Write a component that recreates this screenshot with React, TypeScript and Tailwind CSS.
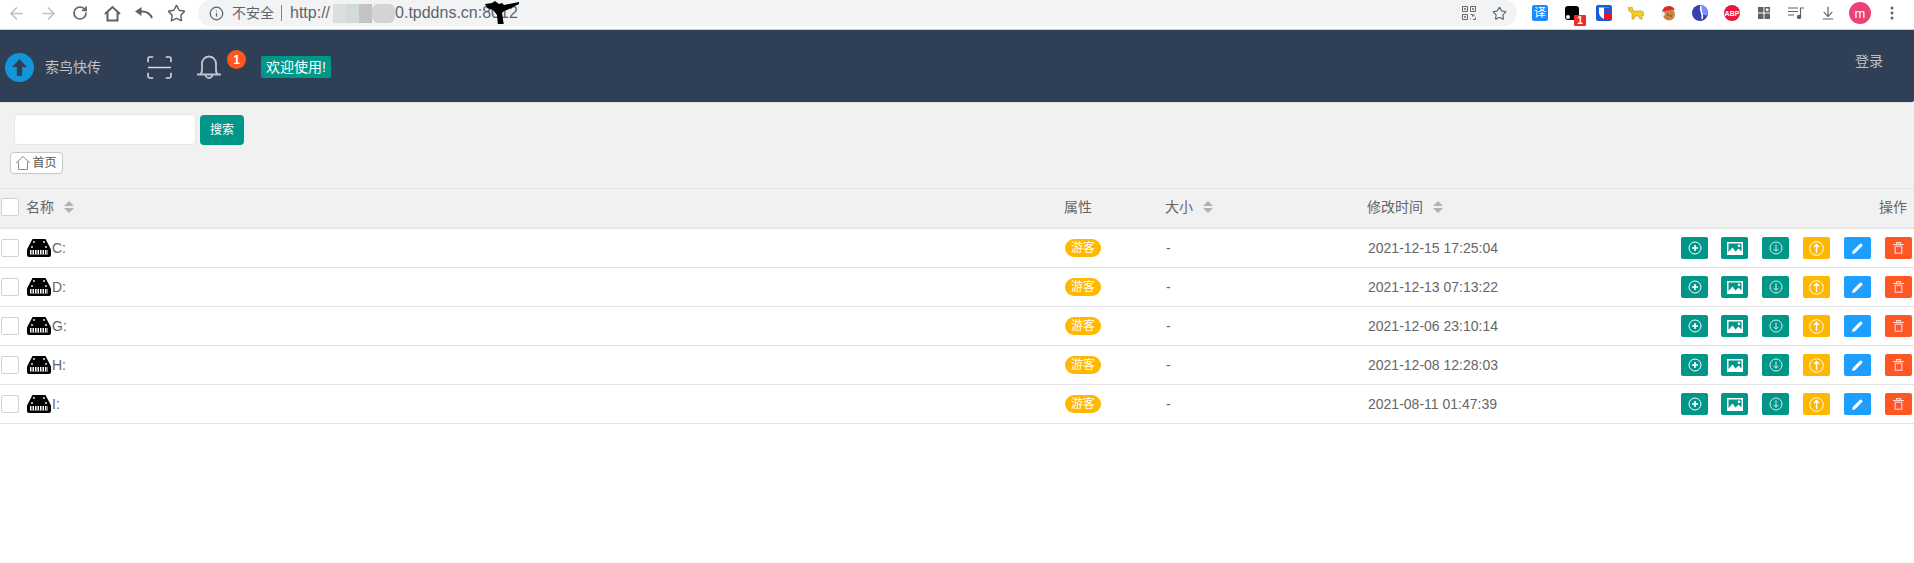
import { ArrowLeft, ArrowRight, RotateCw, Star, Info, ArrowDownToLine } from "lucide-react";

const rows = [
  { name: "C:", time: "2021-12-15 17:25:04" },
  { name: "D:", time: "2021-12-13 07:13:22" },
  { name: "G:", time: "2021-12-06 23:10:14" },
  { name: "H:", time: "2021-12-08 12:28:03" },
  { name: "I:", time: "2021-08-11 01:47:39" },
];

function Sort() {
  return (
    <svg width="10" height="12" viewBox="0 0 10 12" className="ml-[10px]">
      <path d="M5 0l5 5H0zM0 7h10l-5 5z" fill="#b2b2b2" />
    </svg>
  );
}

function Check() {
  return <div className="ml-px h-[18px] w-[18px] shrink-0 rounded-[2px] border border-[#d2d2d2] bg-white" />;
}

function Disk() {
  return (
    <svg width="24" height="18" viewBox="0 0 24 18" className="shrink-0">
      <path d="M5.500 0h13L23 8.500l1 2V16a2 2 0 0 1-2 2H2a2 2 0 0 1-2-2v-5.500l1-2z" fill="#000" />
      <path d="M3 11h18v4.500H3z" fill="#fff" />
      <path d="M5 11v4.500M7.500 11v4.500M10 11v4.500M12.500 11v4.500M15 11v4.500M17.500 11v4.500M20 11v4.500" stroke="#000" strokeWidth="1" />
      <circle cx="7" cy="3" r="0.900" fill="#fff" />
      <circle cx="17" cy="3" r="0.900" fill="#fff" />
      <circle cx="5" cy="8" r="0.900" fill="#fff" />
      <circle cx="19" cy="8" r="0.900" fill="#fff" />
    </svg>
  );
}

function Actions() {
  const cls = "flex h-[22px] w-[27px] items-center justify-center rounded-[2px]";
  return (
    <div className="flex gap-[14px]">
      <div className={`${cls} mr-[-1px] bg-[#009688]`}>
        <svg width="14" height="14" viewBox="0 0 14 14" fill="none" stroke="#fff">
          <circle cx="7" cy="7" r="6" />
          <path d="M7 4v6M4 7h6" strokeWidth="1.600" />
        </svg>
      </div>
      <div className={`${cls} bg-[#009688]`}>
        <svg width="16" height="13" viewBox="0 0 16 13">
          <path d="M0 0h16v13H0z" fill="#fff" />
          <path d="M1.500 1.500h13v8l-3-3-3 3-3-4-4 4.500z" fill="#009688" />
          <circle cx="12" cy="3.700" r="1.300" fill="#fff" />
        </svg>
      </div>
      <div className={`${cls} bg-[#009688]`}>
        <svg width="14" height="14" viewBox="0 0 14 14" fill="none" stroke="#d8f0ed">
          <circle cx="7" cy="7" r="6" />
          <path d="M7 3.500v6.500M4.500 7.800L7 10.300l2.500-2.500" />
        </svg>
      </div>
      <div className={`${cls} bg-[#ffb800]`}>
        <svg width="15" height="15" viewBox="0 0 15 15" fill="none" stroke="#fff">
          <circle cx="7.500" cy="7.500" r="6.800" />
          <path d="M7.500 12V3.500M5 6l2.500-2.500L10 6" strokeWidth="1.400" />
        </svg>
      </div>
      <div className={`${cls} bg-[#1e9fff]`}>
        <svg width="11" height="11" viewBox="0 0 11 11">
          <path d="M0 11l.8-3L8 .8a1 1 0 0 1 1.400 0l.8.8a1 1 0 0 1 0 1.400L3 10.200z" fill="#fff" />
        </svg>
      </div>
      <div className={`${cls} bg-[#ff5722]`}>
        <svg width="11" height="12" viewBox="0 0 11 12" fill="none">
          <path d="M0 2.500h11M3.500 2V.6h4V2" stroke="#ffd9cc" strokeWidth="1.200" />
          <path d="M1.500 3.500h8V12h-8z" fill="#ffb3c0" />
          <path d="M3 5h5v5.500H3z" fill="#ff5722" />
        </svg>
      </div>
    </div>
  );
}

function Ext({ children }: { children: React.ReactNode }) {
  return <div className="flex w-[32px] items-center justify-center">{children}</div>;
}

function Toolbar() {
  const gray = "#5f6368";
  return (
    <div className="flex h-[30px] items-start border-b border-[#ccd0d4] bg-white">
      <div className="flex h-[26px] items-center">
        <div className="flex w-[32px] justify-center"><ArrowLeft size={19} color="#bdc1c6" /></div>
        <div className="flex w-[32px] justify-center"><ArrowRight size={19} color="#bdc1c6" /></div>
        <div className="flex w-[32px] justify-center"><RotateCw size={16} color={gray} strokeWidth={2.600} /></div>
        <div className="flex w-[32px] justify-center">
          <svg width="17" height="17" viewBox="0 0 17 17" fill="none" stroke={gray} strokeWidth="2">
            <path d="M1 9l7.500-7L16 9M3.500 7.500V15.500h10V7.500" />
          </svg>
        </div>
        <div className="flex w-[32px] justify-center">
          <svg width="18" height="12" viewBox="0 0 18 12" fill="none">
            <path d="M6.500 0v9L0 4.500z" fill={gray} />
            <path d="M6 4.500q8-.5 11 6.500" stroke={gray} strokeWidth="2" />
          </svg>
        </div>
        <div className="flex w-[32px] justify-center"><Star size={19} color={gray} strokeWidth={1.800} /></div>
      </div>
      <div className="ml-[6px] flex h-[26px] w-[1319px] items-center rounded-[13px] bg-[#f1f3f4] pl-[11px] pr-[10px]">
        <Info size={15} color={gray} strokeWidth={2} />
        <span className="ml-[8px] text-[14px] text-[#5f6368]">不安全</span>
        <span className="ml-[7px] h-[16px] w-px bg-[#80868b]" />
        <div className="relative ml-[8px] flex items-center text-[16px] text-[#5f6368]">
          <span>http://</span>
          <span className="ml-[3px] flex h-[19px] w-[62px] items-stretch">
            <span className="w-[13px] bg-[#dcdedf]" />
            <span className="w-[13px] bg-[#d2dada]" />
            <span className="w-[13px] bg-[#c3c3c5]" />
            <span className="w-[23px] rounded-[6px] bg-[#d4d4d6]" />
          </span>
          <span>0.tpddns.cn:8012</span>
          <svg width="34" height="23" viewBox="0 0 34 23" className="absolute right-[-1px] top-0">
            <path d="M0 3l7-1 3-2 4 3 3-1 2 2 15-3v2l-12 6-3 1-2 2 2 13h-6l-1-11-4-5-6-2z" fill="#000" />
          </svg>
        </div>
        <svg width="16" height="16" viewBox="0 0 16 16" className="ml-auto mr-[15px]" fill="none" stroke="#666">
          <path d="M1.500 1.500h5v5h-5zM9.500 1.500h5v5h-5zM1.500 9.500h5v5h-5z" />
          <path d="M3.500 3.500h1v1h-1zM11.500 3.500h1v1h-1zM3.500 11.500h1v1h-1zM9.500 9.500h2v2M13 9v2.500M9.500 14.500v-1M12 14.500h2.500v-2" />
        </svg>
        <Star size={15} color={gray} strokeWidth={1.800} />
      </div>
      <div className="ml-[7px] flex h-[26px] items-center">
        <Ext><div className="flex h-[16px] w-[16px] items-center justify-center rounded-[2px] bg-[#1a8cff] text-[12px] leading-none text-white">译</div></Ext>
        <Ext>
          <div className="relative h-[14px] w-[14px] rounded-[3px] bg-black">
            <div className="absolute bottom-[1px] left-[1px] h-[4px] w-[4px] rounded-full bg-white" />
            <div className="absolute bottom-[-6px] right-[-7px] flex h-[11px] w-[12px] items-center justify-center rounded-[1px] bg-[#ee2c2c] text-[10px] font-bold leading-none text-white">1</div>
          </div>
        </Ext>
        <Ext>
          <svg width="16" height="16" viewBox="0 0 16 16">
            <rect width="16" height="16" rx="2" fill="#175ddc" />
            <path d="M3 2.500h10v5q0 4-5 6.500-5-2.500-5-6.500z" fill="#fff" />
            <path d="M8 2.500h5v5q0 4-5 6.500z" fill="#175ddc" />
            <rect x="8" y="8.500" width="7" height="6" rx="1" fill="#e8142a" />
            <path d="M9.500 8.500v-1a2 2 0 0 1 4 0v1" stroke="#e8142a" fill="none" />
          </svg>
        </Ext>
        <Ext>
          <svg width="16" height="14" viewBox="0 0 16 14">
            <path d="M0 1l2 1 2-1 1 4h9l2 2-1 3-1-1v4h-2l-1-3H7l-1 3H4V7L1 5z" fill="#f5d21e" stroke="#b38b18" strokeWidth="0.600" />
          </svg>
        </Ext>
        <Ext>
          <svg width="16" height="16" viewBox="0 0 16 16">
            <circle cx="9" cy="9.500" r="6" fill="#c98343" />
            <path d="M2 7q1-6 7-6 4 0 6 4-6-1-13 2z" fill="#e3262a" />
            <circle cx="3" cy="9" r="2" fill="#eee" />
            <circle cx="8" cy="10" r="0.800" fill="#6b3b12" />
            <circle cx="11" cy="11" r="0.800" fill="#6b3b12" />
          </svg>
        </Ext>
        <Ext>
          <svg width="16" height="16" viewBox="0 0 16 16">
            <circle cx="8" cy="8" r="8" fill="#3a3fb0" />
            <path d="M9 0a8 8 0 0 1 7 8c0 2-2 3-4 2-3-1-4-3-4-6 0-2 0-3 1-4z" fill="#7c8cff" />
            <path d="M9 1c-2 4 3 8 1 13" stroke="#fff" strokeWidth="1.500" fill="none" />
          </svg>
        </Ext>
        <Ext>
          <div className="flex h-[16px] w-[16px] items-center justify-center rounded-full bg-[#e8173f] text-[7px] font-bold leading-none text-white">ABP</div>
        </Ext>
        <Ext>
          <svg width="12" height="12" viewBox="0 0 12 12" fill="#5f6368">
            <path d="M0 0h5.500v5.500H0zM6.500 6.500H12V12H6.500zM0 6.500h5.500V12H0z" />
            <path d="M6.500 0H12v5.500H6.500zM8 1.500v2.500h2.500V1.500z" fillRule="evenodd" />
          </svg>
        </Ext>
        <Ext>
          <svg width="16" height="12" viewBox="0 0 16 12" fill="none" stroke="#5f6368" strokeWidth="1.200">
            <path d="M0 1h10M0 4.500h10M0 8h6M12.500 10V1H16" />
            <circle cx="11" cy="10" r="1.600" fill="#5f6368" />
          </svg>
        </Ext>
        <Ext><ArrowDownToLine size={16} color="#5f6368" strokeWidth={1.800} /></Ext>
        <Ext>
          <div className="flex h-[22px] w-[22px] items-center justify-center rounded-full bg-[#ec407a] text-[13px] leading-none text-white">m</div>
        </Ext>
        <Ext>
          <svg width="4" height="14" viewBox="0 0 4 14" fill="#5f6368">
            <circle cx="2" cy="2" r="1.500" />
            <circle cx="2" cy="7" r="1.500" />
            <circle cx="2" cy="12" r="1.500" />
          </svg>
        </Ext>
      </div>
    </div>
  );
}

export default function App() {
  return (
    <div className="h-[563px] overflow-hidden bg-white font-['Liberation_Sans','Noto_Sans_CJK_SC',sans-serif] text-[14px] text-[#666]">
      <Toolbar />
      <header className="flex h-[72px] items-center rounded-br-[2px] bg-[#2f4056] pl-[5px] pt-[2px]">
        <div className="flex h-[29px] w-[29px] items-center justify-center rounded-full bg-[#1296db]">
          <svg width="15" height="17" viewBox="0 0 14 16">
            <path d="M7 0l7 7.500H9.500V16h-5V7.500H0z" fill="#2f4056" />
          </svg>
        </div>
        <span className="ml-[11px] text-[14px] text-[#c2c2c2]">索鸟快传</span>
        <svg width="25" height="23" viewBox="0 0 24 22" fill="none" stroke="#d8d8d8" strokeWidth="1.500" className="ml-[46px]">
          <path d="M1 6V2.500A1.500 1.500 0 0 1 2.500 1H6M18 1h3.500A1.500 1.500 0 0 1 23 2.500V6M23 16v3.500a1.500 1.500 0 0 1-1.500 1.500H18M6 21H2.500A1.500 1.500 0 0 1 1 19.500V16M1 11h22" />
        </svg>
        <div className="relative ml-[25px]">
          <svg width="24" height="26" viewBox="0 0 24 25" fill="none" stroke="#c2c6cc" strokeWidth="1.800">
            <path d="M0 20h24M3 20q2-1 2-5V9a7 7 0 0 1 14 0v6q0 4 2 5M12 2V1M8.500 20a3.500 3.500 0 0 0 7 0" />
          </svg>
          <div className="absolute left-[30px] top-[-4px] flex h-[19px] w-[19px] items-center justify-center rounded-full bg-[#ff5722] text-[12px] font-bold leading-none text-white">1</div>
        </div>
        <div className="ml-[40px] flex h-[22px] w-[70px] items-center justify-center rounded-[2px] bg-[#009688] text-[14px] text-white">欢迎使用!</div>
        <span className="mb-[12px] ml-auto mr-[31px] text-[14px] text-[#c2c2c2]">登录</span>
      </header>
      <div className="h-[86px] border-t border-[#e6e6e6] bg-[#f1f1f1] pt-[11px]">
        <div className="flex items-center pl-[14px]">
          <div className="h-[31px] w-[182px] rounded-[4px] border border-[#e6e6e6] bg-white" />
          <div className="ml-[4px] flex h-[30px] w-[44px] items-center justify-center rounded-[4px] bg-[#009688] text-[12px] text-white">搜索</div>
        </div>
        <div className="ml-[10px] mt-[7px] flex h-[22px] w-[53px] items-center justify-center gap-[2px] rounded-[4px] border border-[#c9c9c9] bg-white text-[12px] text-[#555]">
          <svg width="14" height="14" viewBox="0 0 14 14" fill="none" stroke="#8b8b9a">
            <path d="M0 7l7-6.500L14 7M2.500 5.500V13.500h9V5.500" />
          </svg>
          首页
        </div>
      </div>
      <div className="flex h-[41px] items-center border-y border-y-[#e6e6e6] border-b-[2px] bg-[#f1f1f1] pb-[2px]">
        <Check />
        <div className="ml-[7px] flex w-[1038px] items-center">名称<Sort /></div>
        <div className="w-[101px]">属性</div>
        <div className="flex w-[202px] items-center">大小<Sort /></div>
        <div className="flex items-center">修改时间<Sort /></div>
        <div className="ml-auto mr-[7px]">操作</div>
      </div>
      {rows.map((r) => (
        <div key={r.name} className="flex h-[39px] items-center border-b border-[#e2e2e2] bg-white">
          <Check />
          <div className="ml-[8px] flex w-[1038px] items-center gap-[1px]"><Disk />{r.name}</div>
          <div className="w-[101px]">
            <div className="flex h-[18px] w-[36px] items-center justify-center rounded-full bg-[#ffb800] text-[12px] text-white">游客</div>
          </div>
          <div className="w-[202px]">-</div>
          <div>{r.time}</div>
          <div className="ml-auto mr-[2px]"><Actions /></div>
        </div>
      ))}
    </div>
  );
}
